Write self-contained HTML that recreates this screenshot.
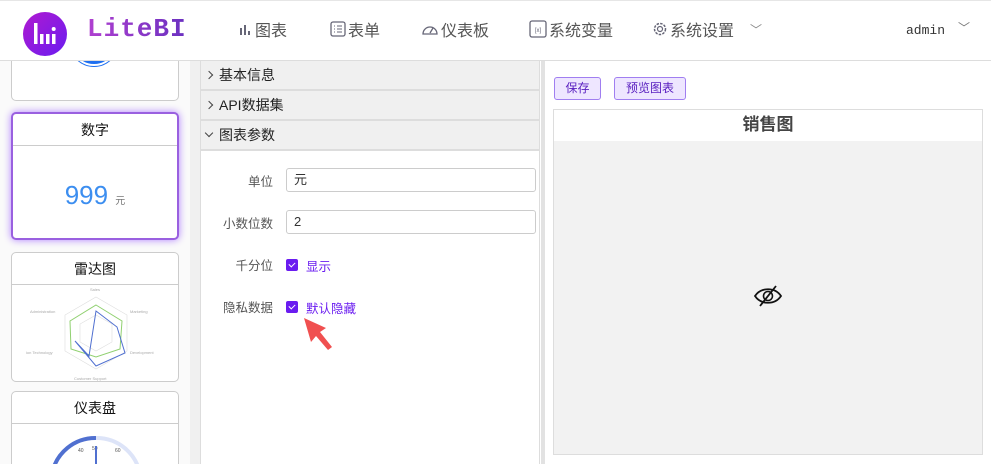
<!DOCTYPE html>
<html><head><meta charset="utf-8"><style>
*{box-sizing:border-box;margin:0;padding:0}
html,body{width:991px;height:464px;overflow:hidden}
body{background:#fff;font-family:"Liberation Sans","Noto Sans CJK SC",sans-serif;position:relative;color:#333}
.hdr{position:absolute;left:0;top:0;width:991px;height:61px;border-top:1px solid #e6e6e6;border-bottom:1px solid #ddd;background:#fff;z-index:2}
.logo{position:absolute;left:23px;top:11px;width:44px;height:44px;border-radius:50%;background:linear-gradient(135deg,#b01ad0,#6a1cf0)}
.brand{position:absolute;left:87px;top:13px;font-family:"Liberation Mono",monospace;font-weight:bold;font-size:26px;background:linear-gradient(90deg,#b040d0,#6a30c0);-webkit-background-clip:text;color:transparent;letter-spacing:1px}
.nav{position:absolute;top:16px;font-size:16px;color:#555;display:flex;align-items:center;gap:2px}
.side{position:absolute;left:0;top:61px;width:190px;height:403px;background:#fafafa;overflow:hidden}
.card{position:absolute;left:11px;width:168px;background:#fff;border:1px solid #ccc;border-radius:5px;overflow:hidden}
.card .t{height:32px;border-bottom:1px solid #ccc;text-align:center;line-height:32px;font-size:14px;color:#111}
.strip{position:absolute;left:190px;top:61px;width:10px;height:403px;background:#f0f0f0}
.mid{position:absolute;left:200px;top:61px;width:340px;height:403px;background:#fff;border-left:1px solid #ddd;border-right:1px solid #ddd}
.ch{height:30px;background:#f0f0f0;border-bottom:2px solid #ddd;font-size:14px;line-height:28px;padding-left:18px;color:#222;position:relative}
.ch:before{content:"";position:absolute;left:5px;top:11px;width:5px;height:5px;border-right:1px solid #444;border-top:1px solid #444;transform:rotate(45deg)}
.ch.o:before{transform:rotate(135deg);top:9px}
.lab{position:absolute;font-size:12.5px;color:#555;text-align:right;width:72px;left:0}
.inp{position:absolute;left:85px;width:250px;height:24px;border:1px solid #ccc;border-radius:3px;font-size:13px;padding-left:7px;line-height:22px;color:#333}
.cb{position:absolute;left:85px;width:12px;height:12px;background:#6a1cf0;border-radius:2px}
.cb:after{content:"";position:absolute;left:4px;top:2px;width:3px;height:5px;border-right:1.5px solid #fff;border-bottom:1.5px solid #fff;transform:rotate(45deg)}
.cbt{position:absolute;left:105px;font-size:12.5px;color:#6a1cf0}
.div{position:absolute;left:541px;top:61px;width:4px;height:403px;background:#e2e2e2}
.right{position:absolute;left:545px;top:61px;width:446px;height:403px;background:#fff}
.btn{position:absolute;top:16px;height:23px;border:1px solid #a07ef0;background:#eee6ff;border-radius:3px;font-size:12px;color:#5a20c0;line-height:21px;text-align:center}
.box{position:absolute;left:8px;top:48px;width:430px;height:346px;border:1px solid #ddd;background:#f2f2f2}
</style></head><body>
<div class="hdr">
 <div class="logo"><svg width="44" height="44"><g fill="#fff"><rect x="11" y="11" width="3.5" height="21"/><rect x="17" y="22" width="3.5" height="10"/><rect x="23" y="22" width="3.5" height="10"/><rect x="29" y="22" width="3.5" height="10"/><circle cx="30.7" cy="17" r="2"/></g></svg></div>
 <div class="brand">LiteBI</div>
 <div class="nav" style="left:239px"><svg width="14" height="14"><g fill="#667"><rect x="1" y="6" width="2" height="7"/><rect x="5" y="3" width="2" height="10"/><rect x="9" y="9" width="2" height="4"/></g></svg>图表</div>
 <div class="nav" style="left:330px"><svg width="16" height="16"><rect x="1" y="1" width="14" height="14" rx="2" fill="none" stroke="#667" stroke-width="1.3"/><path d="M4 5h1M7 5h5M4 8h1M7 8h5M4 11h1M7 11h5" stroke="#667"/></svg>表单</div>
 <div class="nav" style="left:421px"><svg width="18" height="16"><path d="M2 13A7 7 0 1 1 16 13Z" fill="none" stroke="#667" stroke-width="1.3"/><path d="M9 12L12 7" stroke="#667" stroke-width="1.3"/></svg>仪表板</div>
 <div class="nav" style="left:529px"><svg width="18" height="18"><rect x="1" y="1" width="16" height="16" rx="2" fill="none" stroke="#667" stroke-width="1.3"/><text x="9" y="12" font-size="6" text-anchor="middle" fill="#667">[x]</text></svg>系统变量</div>
 <div class="nav" style="left:652px"><svg width="16" height="16"><circle cx="8" cy="8" r="5.5" fill="none" stroke="#667" stroke-width="1.5" stroke-dasharray="2.5 1.2"/><circle cx="8" cy="8" r="2.5" fill="none" stroke="#667" stroke-width="1.2"/></svg>系统设置<span style="font-size:12px;margin-left:14px;color:#888">﹀</span></div>
 <div style="position:absolute;left:906px;top:22px;font-family:'Liberation Mono',monospace;font-size:13px;color:#333">admin</div>
 <div style="position:absolute;left:958px;top:18px;font-size:12px;color:#777">﹀</div>
</div>
<div class="side">
 <div class="card" style="top:-10px;height:50px"><div style="position:absolute;left:58px;top:-20px;width:48px;height:34px;border-radius:0 0 24px 24px;background:#1e6ff0;border:2px solid #fff;box-shadow:0 0 0 1px #1e6ff0"></div></div>
 <div class="card" style="top:51px;height:128px;border:2px solid #9a60e0;box-shadow:0 0 8px #b080ff"><div class="t">数字</div><div style="text-align:center;margin-top:34px;font-size:26px;color:#3c8ef0">999 <span style="font-size:10px;color:#777">元</span></div></div>
 <div class="card" style="top:191px;height:130px"><div class="t">雷达图</div>
 <svg width="168" height="98"><g fill="none" stroke="#ddd" stroke-width=".6"><polygon points="84,12 115,30 115,66 84,84 53,66 53,30"/><polygon points="84,30 100,39 100,57 84,66 68,57 68,39"/></g><polygon points="84,20 110,36 108,64 84,72 59,64 58,36" fill="none" stroke="#90d070" stroke-width="1"/><polygon points="84,26 105,42 113,68 84,81 63,56 77,71" fill="none" stroke="#5070d0" stroke-width="1"/><g fill="#aaa" font-size="4"><text x="78" y="6">Sales</text><text x="118" y="28">Marketing</text><text x="118" y="69">Development</text><text x="62" y="95">Customer Support</text><text x="14" y="69">ion Technology</text><text x="18" y="28">Administration</text></g></svg></div>
 <div class="card" style="top:330px;height:90px"><div class="t">仪表盘</div><svg width="168" height="60"><path d="M40 50A44 44 0 0 1 84 14" fill="none" stroke="#5070d0" stroke-width="4"/><path d="M84 14A44 44 0 0 1 128 50" fill="none" stroke="#dde4f8" stroke-width="4"/><g font-size="5" fill="#555"><text x="80" y="26">50</text><text x="66" y="28">40</text><text x="103" y="28">60</text></g><rect x="83" y="22" width="2" height="30" fill="#5070d0"/></svg></div>
</div>
<div class="strip"></div>
<div class="mid">
 <div class="ch">基本信息</div><div class="ch">API数据集</div><div class="ch o">图表参数</div>
 <div class="lab" style="top:110px">单位</div><div class="inp" style="top:107px">元</div>
 <div class="lab" style="top:152px">小数位数</div><div class="inp" style="top:149px">2</div>
 <div class="lab" style="top:194px">千分位</div><div class="cb" style="top:198px"></div><div class="cbt" style="top:195px">显示</div>
 <div class="lab" style="top:236px">隐私数据</div><div class="cb" style="top:240px"></div><div class="cbt" style="top:237px">默认隐藏</div>
 <svg style="position:absolute;left:100px;top:254px" width="35" height="38"><path d="M3 3L25 13L19 17L31 32L27 35L15 21L10 27Z" fill="#f05050"/></svg>
</div>
<div class="div"></div>
<div class="right">
 <div class="btn" style="left:9px;width:47px">保存</div>
 <div class="btn" style="left:69px;width:72px">预览图表</div>
 <div class="box"><div style="height:31px;background:#fff;text-align:center;font-size:17px;font-weight:bold;color:#444;line-height:29px">销售图</div>
 <svg style="position:absolute;left:199px;top:174px" width="30" height="24"><path d="M2 12C8 3 22 3 28 12C22 21 8 21 2 12Z" fill="none" stroke="#111" stroke-width="1.8"/><circle cx="15" cy="12" r="4.5" fill="none" stroke="#111" stroke-width="1.6"/><path d="M23 2L7 22" stroke="#111" stroke-width="1.8"/></svg></div>
</div>
</body></html>
